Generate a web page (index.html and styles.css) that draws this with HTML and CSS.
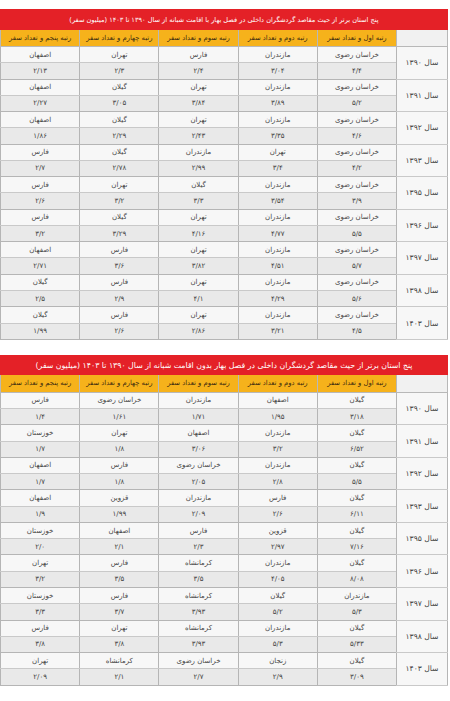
FILE: index.html
```html
<!DOCTYPE html>
<html lang="fa" dir="rtl">
<head>
<meta charset="utf-8">
<title>پنج استان برتر</title>
<link rel="stylesheet" href="styles.css">
</head>
<body>
<div class="page">
  <table class="grid t1">
    <colgroup><col class="c-year"><col class="c-r"><col class="c-r"><col class="c-r"><col class="c-r"><col class="c-r"></colgroup>
    <thead>
      <tr class="title-row"><th colspan="6" class="title title1">پنج استان برتر از حیث مقاصد گردشگران داخلی در فصل بهار با اقامت شبانه از سال ۱۳۹۰ تا ۱۴۰۳ (میلیون سفر)</th></tr>
      <tr class="head-row"><th class="year-head"></th><th>رتبه اول و تعداد سفر</th><th>رتبه دوم و تعداد سفر</th><th>رتبه سوم و تعداد سفر</th><th>رتبه چهارم و تعداد سفر</th><th>رتبه پنجم و تعداد سفر</th></tr>
    </thead>
    <tbody>
      <tr class="n"><td class="year" rowspan="2">سال ۱۳۹۰</td><td>خراسان رضوی</td><td>مازندران</td><td>فارس</td><td>تهران</td><td>اصفهان</td></tr>
      <tr class="v"><td>۴/۴</td><td>۳/۰۴</td><td>۲/۴</td><td>۲/۳</td><td>۲/۱۳</td></tr>
      <tr class="n"><td class="year" rowspan="2">سال ۱۳۹۱</td><td>خراسان رضوی</td><td>مازندران</td><td>تهران</td><td>گیلان</td><td>اصفهان</td></tr>
      <tr class="v"><td>۵/۲</td><td>۳/۸۹</td><td>۳/۸۴</td><td>۳/۰۵</td><td>۲/۲۷</td></tr>
      <tr class="n"><td class="year" rowspan="2">سال ۱۳۹۲</td><td>خراسان رضوی</td><td>مازندران</td><td>تهران</td><td>گیلان</td><td>اصفهان</td></tr>
      <tr class="v"><td>۴/۶</td><td>۳/۳۵</td><td>۲/۴۳</td><td>۲/۲۹</td><td>۱/۸۶</td></tr>
      <tr class="n"><td class="year" rowspan="2">سال ۱۳۹۳</td><td>خراسان رضوی</td><td>تهران</td><td>مازندران</td><td>گیلان</td><td>فارس</td></tr>
      <tr class="v"><td>۴/۲</td><td>۳/۴</td><td>۲/۹۹</td><td>۲/۷۸</td><td>۲/۷</td></tr>
      <tr class="n"><td class="year" rowspan="2">سال ۱۳۹۵</td><td>خراسان رضوی</td><td>مازندران</td><td>گیلان</td><td>تهران</td><td>فارس</td></tr>
      <tr class="v"><td>۳/۹</td><td>۳/۵۴</td><td>۳/۳</td><td>۳/۲</td><td>۲/۶</td></tr>
      <tr class="n"><td class="year" rowspan="2">سال ۱۳۹۶</td><td>خراسان رضوی</td><td>مازندران</td><td>تهران</td><td>گیلان</td><td>فارس</td></tr>
      <tr class="v"><td>۵/۵</td><td>۴/۷۷</td><td>۴/۱۶</td><td>۳/۲۹</td><td>۳/۲</td></tr>
      <tr class="n"><td class="year" rowspan="2">سال ۱۳۹۷</td><td>خراسان رضوی</td><td>مازندران</td><td>تهران</td><td>فارس</td><td>اصفهان</td></tr>
      <tr class="v"><td>۵/۷</td><td>۴/۵۱</td><td>۳/۸۲</td><td>۳/۶</td><td>۲/۷۱</td></tr>
      <tr class="n"><td class="year" rowspan="2">سال ۱۳۹۸</td><td>خراسان رضوی</td><td>مازندران</td><td>تهران</td><td>فارس</td><td>گیلان</td></tr>
      <tr class="v"><td>۵/۶</td><td>۴/۲۹</td><td>۴/۱</td><td>۲/۹</td><td>۲/۵</td></tr>
      <tr class="n"><td class="year" rowspan="2">سال ۱۴۰۳</td><td>خراسان رضوی</td><td>مازندران</td><td>تهران</td><td>فارس</td><td>گیلان</td></tr>
      <tr class="v"><td>۴/۵</td><td>۳/۲۱</td><td>۲/۸۶</td><td>۲/۶</td><td>۱/۹۹</td></tr>
    </tbody>
  </table>

  <table class="grid t2">
    <colgroup><col class="c-year"><col class="c-r"><col class="c-r"><col class="c-r"><col class="c-r"><col class="c-r"></colgroup>
    <thead>
      <tr class="title-row"><th colspan="6" class="title title2">پنج استان برتر از حیث مقاصد گردشگران داخلی در فصل بهار بدون اقامت شبانه از سال ۱۳۹۰ تا ۱۴۰۳ (میلیون سفر)</th></tr>
      <tr class="head-row"><th class="year-head"></th><th>رتبه اول و تعداد سفر</th><th>رتبه دوم و تعداد سفر</th><th>رتبه سوم و تعداد سفر</th><th>رتبه چهارم و تعداد سفر</th><th>رتبه پنجم و تعداد سفر</th></tr>
    </thead>
    <tbody>
      <tr class="n"><td class="year" rowspan="2">سال ۱۳۹۰</td><td>گیلان</td><td>اصفهان</td><td>مازندران</td><td>خراسان رضوی</td><td>فارس</td></tr>
      <tr class="v"><td>۳/۱۸</td><td>۱/۹۵</td><td>۱/۷۱</td><td>۱/۶۱</td><td>۱/۴</td></tr>
      <tr class="n"><td class="year" rowspan="2">سال ۱۳۹۱</td><td>گیلان</td><td>مازندران</td><td>اصفهان</td><td>تهران</td><td>خوزستان</td></tr>
      <tr class="v"><td>۶/۵۲</td><td>۳/۲</td><td>۳/۰۶</td><td>۱/۸</td><td>۱/۷</td></tr>
      <tr class="n"><td class="year" rowspan="2">سال ۱۳۹۲</td><td>گیلان</td><td>مازندران</td><td>خراسان رضوی</td><td>فارس</td><td>اصفهان</td></tr>
      <tr class="v"><td>۵/۵</td><td>۲/۸</td><td>۲/۰۵</td><td>۱/۸</td><td>۱/۷</td></tr>
      <tr class="n"><td class="year" rowspan="2">سال ۱۳۹۳</td><td>گیلان</td><td>فارس</td><td>مازندران</td><td>قزوین</td><td>اصفهان</td></tr>
      <tr class="v"><td>۶/۱۱</td><td>۲/۶</td><td>۲/۰۹</td><td>۱/۹۹</td><td>۱/۹</td></tr>
      <tr class="n"><td class="year" rowspan="2">سال ۱۳۹۵</td><td>گیلان</td><td>قزوین</td><td>فارس</td><td>اصفهان</td><td>خوزستان</td></tr>
      <tr class="v"><td>۷/۱۶</td><td>۲/۹۷</td><td>۲/۳</td><td>۲/۱</td><td>۲/۰</td></tr>
      <tr class="n"><td class="year" rowspan="2">سال ۱۳۹۶</td><td>گیلان</td><td>مازندران</td><td>کرمانشاه</td><td>فارس</td><td>تهران</td></tr>
      <tr class="v"><td>۸/۰۸</td><td>۴/۰۵</td><td>۳/۵</td><td>۳/۵</td><td>۳/۲</td></tr>
      <tr class="n"><td class="year" rowspan="2">سال ۱۳۹۷</td><td>مازندران</td><td>گیلان</td><td>کرمانشاه</td><td>فارس</td><td>خوزستان</td></tr>
      <tr class="v"><td>۵/۳</td><td>۵/۲</td><td>۳/۹۳</td><td>۳/۷</td><td>۳/۳</td></tr>
      <tr class="n"><td class="year" rowspan="2">سال ۱۳۹۸</td><td>گیلان</td><td>مازندران</td><td>کرمانشاه</td><td>تهران</td><td>فارس</td></tr>
      <tr class="v"><td>۵/۳۳</td><td>۵/۳</td><td>۳/۹۳</td><td>۳/۸</td><td>۳/۸</td></tr>
      <tr class="n"><td class="year" rowspan="2">سال ۱۴۰۳</td><td>گیلان</td><td>زنجان</td><td>خراسان رضوی</td><td>کرمانشاه</td><td>تهران</td></tr>
      <tr class="v"><td>۳/۰۹</td><td>۲/۹</td><td>۲/۷</td><td>۲/۱</td><td>۲/۰۹</td></tr>
    </tbody>
  </table>
</div>
</body>
</html>
```

FILE: styles.css
```css
* { box-sizing: border-box; }

html, body {
  margin: 0;
  padding: 0;
  background: #ffffff;
}

body {
  font-family: "DejaVu Sans", "Noto Sans", sans-serif;
  color: #3a3a3a;
}

.page {
  width: 450px;
  height: 701px;
  padding: 9px 2px 0 1px;
  overflow: hidden;
}

.grid {
  width: 447px;
  border-collapse: collapse;
  table-layout: fixed;
  direction: rtl;
}

.t2 {
  margin-top: 15px;
}

.c-year { width: 51px; }
.c-r { width: 79.2px; }

.title {
  background: #e42127;
  color: #ffffff;
  font-weight: normal;
  text-align: center;
  padding: 0;
  border: 1px solid #e42127;
  white-space: nowrap;
}

.title1 {
  height: 20px;
  font-size: 6.6px;
  padding-top: 1px;
}

.title2 {
  height: 19px;
  font-size: 7.8px;
  padding-top: 1px;
}

.head-row th {
  height: 17px;
  background: #f6b21b;
  color: #3b2a10;
  font-weight: normal;
  font-size: 6.8px;
  padding: 0;
  text-align: center;
  border: 1px solid #b8b8b8;
  white-space: nowrap;
}

.t2 .head-row th { height: 18px; }

.head-row .year-head {
  background: #f1f1f1;
}

tbody td {
  height: 16.28px;
  padding: 0;
  text-align: center;
  font-size: 7px;
  color: #444444;
  border: 1px solid #b5b5b5;
  white-space: nowrap;
}

tbody tr.n td {
  background: #f7f7f7;
  border-bottom-color: #c9c9c9;
}

tbody tr.v td {
  background: #e9e9e9;
}

tbody td.year {
  background: #f3f3f3;
  font-size: 7.6px;
  text-align: center;
  color: #444444;
  border-bottom-color: #b5b5b5;
}
```
